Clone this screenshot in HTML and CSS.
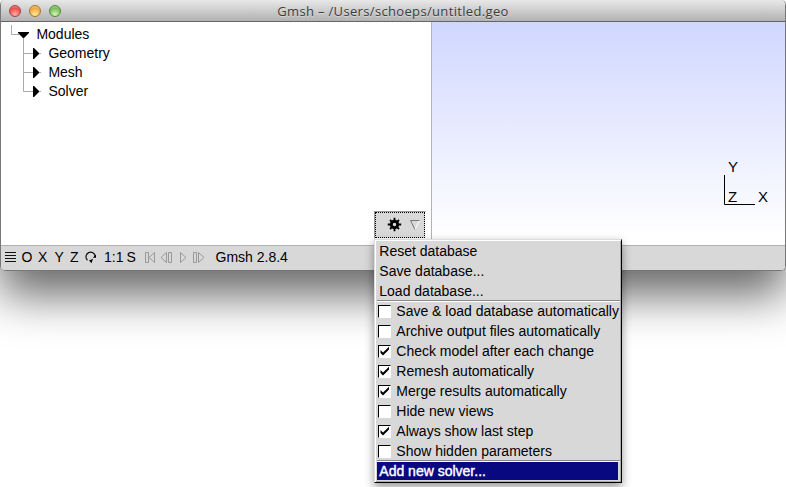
FILE: index.html
```html
<!DOCTYPE html>
<html lang="en">
<head>
<meta charset="utf-8">
<title>Gmsh</title>
<link rel="stylesheet" href="styles.css">
</head>
<body>
<main class="window">
  <header class="titlebar">
    <div class="lights"><i class="light red"></i><i class="light amber"></i><i class="light green"></i></div>
    <h1 class="title">Gmsh – /Users/schoeps/untitled.geo</h1>
  </header>
  <section class="content">
    <div class="tree">
      <div class="node"><svg class="branch root" viewBox="0 0 35 19"><path class="wire" d="M10.5 0V9.5H18M22.5 11V19"/><path d="M17 7H28V8L23 13H22L17 8Z"/></svg><span>Modules</span></div>
      <div class="node"><svg class="branch" viewBox="0 0 47 19"><path class="wire" d="M22.5 0V19M22.5 9.5H40"/><path d="M32 4H33L38 9V10L33 15H32Z"/></svg><span>Geometry</span></div>
      <div class="node"><svg class="branch" viewBox="0 0 47 19"><path class="wire" d="M22.5 0V19M22.5 9.5H40"/><path d="M32 4H33L38 9V10L33 15H32Z"/></svg><span>Mesh</span></div>
      <div class="node"><svg class="branch" viewBox="0 0 47 19"><path class="wire" d="M22.5 0V9.5H40"/><path d="M32 4H33L38 9V10L33 15H32Z"/></svg><span>Solver</span></div>
    </div>
    <div class="canvas">
      <svg class="axes" viewBox="0 0 50 50" width="50" height="50"><path d="M4.5 17V46.5H35" fill="none" stroke="#000"/><text x="8" y="14">Y</text><text x="8" y="44">Z</text><text x="38" y="44">X</text></svg>
    </div>
  </section>
  <footer class="status">
    <svg class="tools" viewBox="0 0 210 24" width="210" height="24">
      <path d="M4 6.5H15M4 9.5H15M4 12.5H15M4 15.5H15" fill="none" stroke="#111"/>
      <text x="20.5" y="16">O</text><text x="37" y="16">X</text><text x="53.5" y="16">Y</text><text x="69" y="16">Z</text>
      <path d="M86.500 14.200A4.600 4.600 0 1 1 94.200 10.500" fill="none" stroke="#111" stroke-width="1.200"/><path d="M95 8.500V11.800H91.800ZM88 14.500L92 12.800L90.500 17.200Z"/>
      <text x="103" y="16">1:1</text><text x="125.500" y="16">S</text>
      <g class="player"><path d="M144.500 6.500H147.500V16.500H144.500ZM153.500 6.500V16.500L148 11.500ZM165.500 6.500V16.500L160 11.500ZM167.500 6.500H170.500V16.500H167.500ZM179.500 6.500V16.500L185 11.500ZM192.500 6.500H195.500V16.500H192.500ZM197.500 6.500V16.500L203 11.500Z"/></g>
    </svg>
    <span class="version">Gmsh 2.8.4</span>
  </footer>
</main>
<button class="gear">
  <svg viewBox="0 0 52 28" width="52" height="28"><g stroke="#000" fill="none"><circle cx="20.500" cy="13.500" r="3.200" stroke-width="2.900"/><path stroke-width="1.800" d="M20.500 6.800V9.500M20.500 17.500V20.200M13.800 13.500H16.500M24.500 13.500H27.200M16 9L18 11M23 16L25 18M16 18L18 16M23 11L25 9"/></g><path d="M45.500 9L41 18.500" fill="none" stroke="#fff"/><path d="M45.500 9.500H36.500L41 18.500" fill="none" stroke="#777"/></svg>
</button>
<nav class="menu">
  <div class="item">Reset database</div>
  <div class="item">Save database...</div>
  <div class="item">Load database...</div>
  <hr class="rule">
  <div class="item"><i class="box"></i><span>Save &amp; load database automatically</span></div>
  <div class="item"><i class="box"></i><span>Archive output files automatically</span></div>
  <div class="item"><i class="box"><svg viewBox="0 0 11 11"><path d="M1.500 4V7L4 9.500L10 3.500V.8L4 6.600Z"/></svg></i><span>Check model after each change</span></div>
  <div class="item"><i class="box"><svg viewBox="0 0 11 11"><path d="M1.500 4V7L4 9.500L10 3.500V.8L4 6.600Z"/></svg></i><span>Remesh automatically</span></div>
  <div class="item"><i class="box"><svg viewBox="0 0 11 11"><path d="M1.500 4V7L4 9.500L10 3.500V.8L4 6.600Z"/></svg></i><span>Merge results automatically</span></div>
  <div class="item"><i class="box"></i><span>Hide new views</span></div>
  <div class="item"><i class="box"><svg viewBox="0 0 11 11"><path d="M1.500 4V7L4 9.500L10 3.500V.8L4 6.600Z"/></svg></i><span>Always show last step</span></div>
  <div class="item"><i class="box"></i><span>Show hidden parameters</span></div>
  <hr class="rule">
  <div class="item chosen"><span>Add new solver...</span></div>
</nav>
</body>
</html>
```
FILE: styles.css
```css
* { box-sizing: border-box; }
body {
  margin: 0;
  height: 487px;
  overflow: hidden;
  background: #fff;
  color: #000;
  font: 14px "Liberation Sans", Arial, sans-serif;
}
.window {
  height: 271px;
  display: flex;
  flex-direction: column;
  border: solid #777;
  border-width: 0 1px 1px;
  border-radius: 5px;
  overflow: hidden;
  box-shadow: 0 24px 46px rgba(0, 0, 0, .6);
}
.titlebar {
  flex: 0 0 22px;
  display: grid;
  grid-template-columns: 80px 1fr 80px;
  align-items: center;
  border-bottom: 1px solid #656565;
  background: linear-gradient(#e8e8e8, #b2b2b2);
}
.lights { display: flex; gap: 8px; padding-left: 8px; }
.light { width: 12px; height: 12px; border-radius: 50%; border: 1px solid; }
.red { background: radial-gradient(circle at 50% 85%, #ffb0a5, #ee4d4d 65%, #f7b4b0); border-color: #a3403d; }
.amber { background: radial-gradient(circle at 50% 85%, #ffec9c, #efa83c 65%, #f8dca8); border-color: #a57331; }
.green { background: radial-gradient(circle at 50% 85%, #d6f7ae, #78bd58 65%, #c4e3b4); border-color: #4f843e; }
.title {
  margin: 0;
  text-align: center;
  font: 13px/20px "Open Sans", sans-serif;
  letter-spacing: .34px;
  color: #3c3c3c;
  text-shadow: 0 1px rgba(255, 255, 255, .4);
  white-space: nowrap;
}
.content { flex: 1; display: flex; min-height: 0; }
.tree { width: 431px; padding-top: 3px; border-right: 1px solid #b4b4b4; background: #fff; }
.node { height: 19px; display: flex; align-items: center; line-height: 19px; }
.branch { flex: none; width: 47px; height: 19px; margin-right: .4px; }
.branch.root { width: 35px; }
.wire { fill: none; stroke: #aaa; }
.canvas {
  flex: 1;
  display: flex;
  justify-content: flex-end;
  align-items: flex-end;
  padding: 0 15px 37px 0;
  background: linear-gradient(#d0d7ff, #fff 96%);
}
.axes { font-size: 15px; }
.status {
  flex: 0 0 25px;
  display: flex;
  align-items: center;
  border-top: 1px solid #b0b0b0;
  background: #d8d8d8;
}
.tools { flex: none; }
.player { fill: none; stroke: #999; }
.version { margin-left: 4.500px; line-height: 22px; padding-bottom: 2px; }
.gear {
  position: absolute;
  left: 374px;
  top: 211px;
  width: 52px;
  height: 28px;
  padding: 0;
  border: 1px solid;
  border-color: #999 #fff #fff #999;
  background: #d9d9d9;
  outline: 1px dotted #000;
  outline-offset: -2px;
}
.gear svg { display: block; margin: -1px; }
.menu {
  position: absolute;
  left: 374px;
  top: 239px;
  width: 248px;
  height: 244px;
  padding: 1px 1px 0 2px;
  border: 1px solid;
  border-color: #ddd #000 #000 #ddd;
  background: #d8d8d8;
  box-shadow: inset 1px 1px #fff, inset -1px -1px #aaa, 0 4px 9px rgba(0, 0, 0, .42);
}
.item {
  height: 20px;
  padding-left: 2.300px;
  display: flex;
  align-items: center;
  line-height: 20px;
  white-space: nowrap;
}
.rule {
  height: 2px;
  margin: -1px 0;
  border: 0;
  border-top: 1px solid #888;
  background: #fff;
}
.box {
  flex: none;
  width: 13px;
  height: 13px;
  margin: 0 5px 0 -1px;
  border: 1px solid;
  border-color: #000 #fff #fff #000;
  background: #fff;
}
.box svg { display: block; width: 11px; height: 11px; }
.chosen {
  height: 18px;
  margin: 1px 2px 1px 0;
  background: #080880;
  color: #fff;
  line-height: 18px;
  -webkit-text-stroke: .4px #fff;
}
```
